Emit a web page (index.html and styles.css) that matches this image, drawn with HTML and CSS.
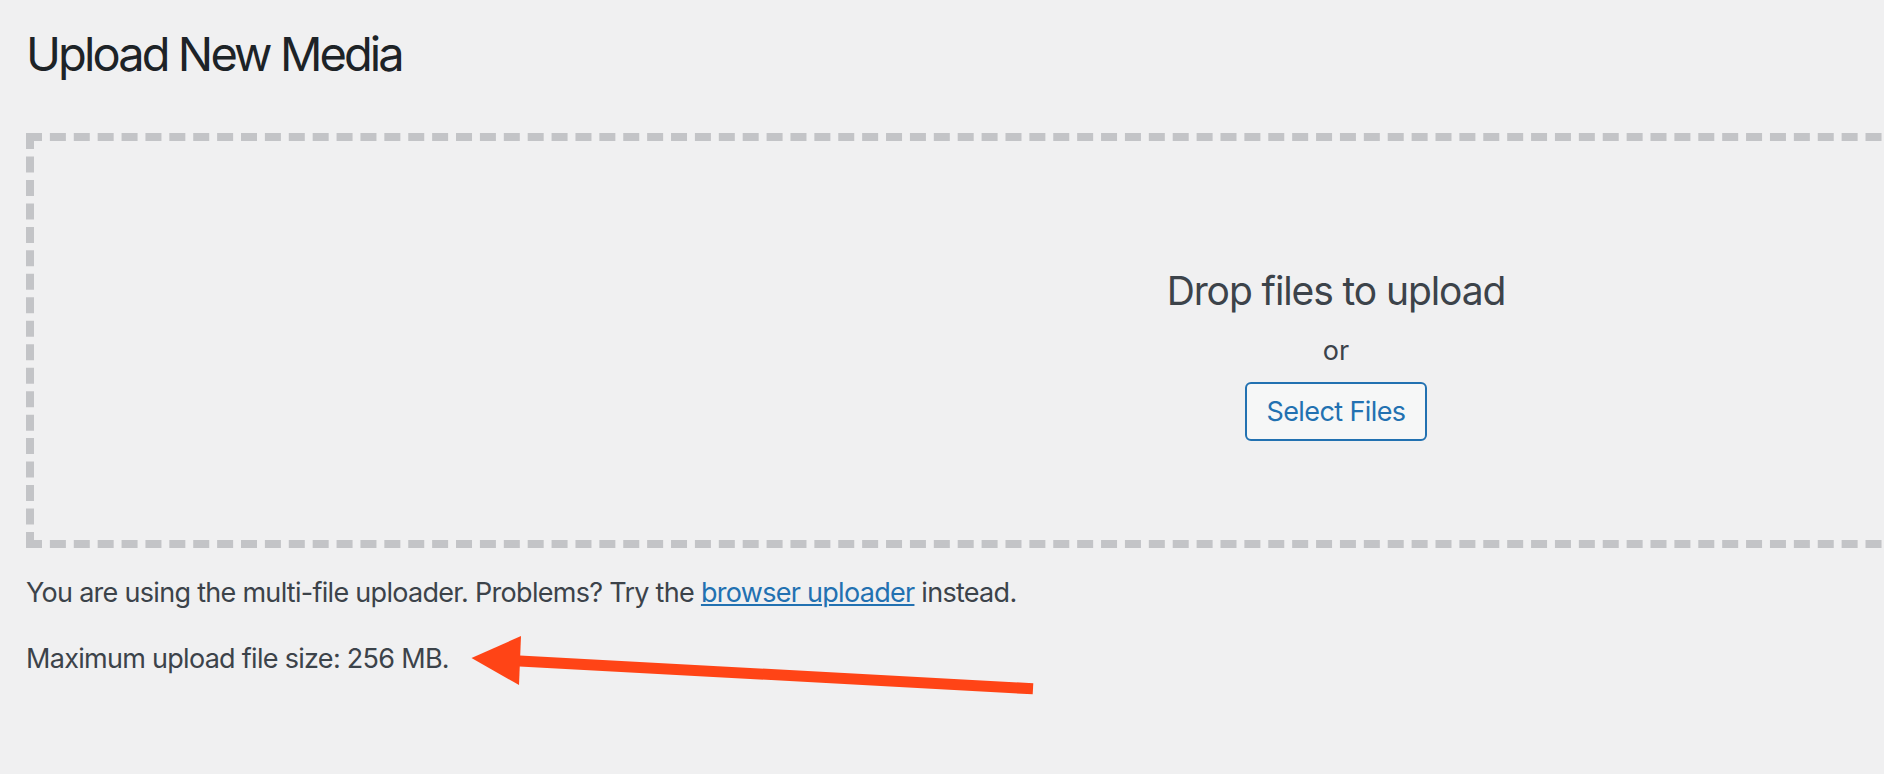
FILE: index.html
```html
<!DOCTYPE html>
<html lang="en">
<head>
<meta charset="utf-8">
<title>Upload New Media</title>
<link rel="stylesheet" href="styles.css">
</head>
<body>
<div class="wrap">
  <h1 class="page-title">Upload New Media</h1>
  <div class="drop-area">
    <div class="drop-inner">
      <p class="drop-instructions">Drop files to upload</p>
      <p class="drop-or">or</p>
      <button class="select-button" type="button">Select Files</button>
    </div>
  </div>
  <p class="note">You are using the multi-file uploader. Problems? Try the <a href="#" class="link">browser uploader</a> instead.</p>
  <p class="note note-size">Maximum upload file size: 256 MB.</p>
</div>
<svg class="annotation-arrow" width="590" height="90" viewBox="0 0 590 90" aria-hidden="true">
  <line x1="55" y1="40.7" x2="573" y2="68.8" stroke="#ff4416" stroke-width="11"/>
  <polygon points="11.5,38 61,16 59,65" fill="#ff4416"/>
</svg>
</body>
</html>
```
FILE: styles.css
```css
html, body {
  margin: 0;
  padding: 0;
  overflow: hidden;
  background: #f0f0f1;
}
body {
  width: 1884px;
  height: 774px;
  position: relative;
  font-family: "Inter", "Liberation Sans", sans-serif;
  color: #3c434a;
}
.wrap {
  padding: 24px 0 0 26px;
}
.page-title {
  margin: 0;
  font-size: 47px;
  line-height: 60px;
  font-weight: 400;
  letter-spacing: -2.9px;
  color: #1d2327;
}
.drop-area {
  margin-top: 49px;
  width: 2620px;
  height: 415px;
  box-sizing: border-box;
  border: 8px dashed #c3c4c7;
}
.drop-inner {
  display: flex;
  flex-direction: column;
  align-items: center;
  padding-top: 125px;
}
.drop-instructions {
  margin: 0;
  font-size: 39px;
  line-height: 50px;
  letter-spacing: -1.1px;
  color: #3c434a;
}
.drop-or {
  margin: 18px 0 0;
  font-size: 27px;
  line-height: 34px;
}
.select-button {
  margin-top: 14px;
  height: 59px;
  padding: 0 19px;
  border: 2px solid #2271b1;
  border-radius: 6px;
  background: #f6f7f7;
  color: #2271b1;
  font-family: "Inter", "Liberation Sans", sans-serif;
  font-size: 27px;
  line-height: 55px;
  letter-spacing: -0.6px;
}
.note {
  margin: 25px 0 0;
  font-size: 27px;
  line-height: 40px;
  letter-spacing: -0.71px;
}
.note-size {
  margin-top: 26px;
}
.link {
  color: #2271b1;
  text-decoration: underline;
  text-decoration-thickness: 2px;
  text-underline-offset: 2px;
}
.annotation-arrow {
  position: absolute;
  left: 460px;
  top: 620px;
}
```
